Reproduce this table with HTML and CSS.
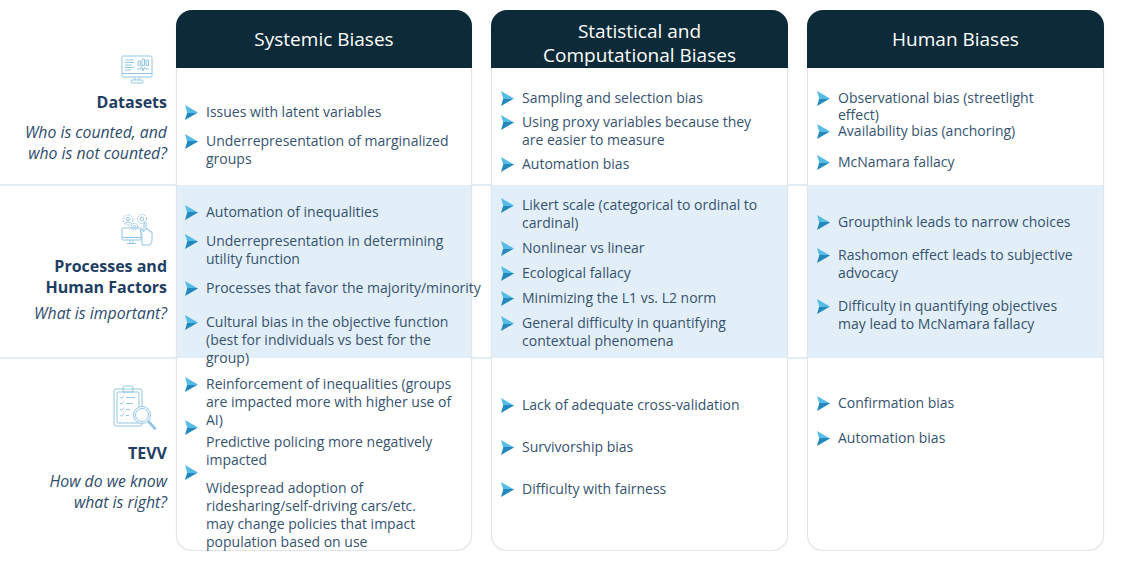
FILE: index.html
```html
<!DOCTYPE html>
<html lang="en">
<head>
<meta charset="utf-8">
<title>Sources of Bias</title>
<link rel="stylesheet" href="styles.css">
</head>
<body>
<svg class="defs" aria-hidden="true">
  <defs>
    <linearGradient id="arrowGrad" x1="0" y1="0" x2="0" y2="1">
      <stop offset="0" stop-color="#55bbe7"/>
      <stop offset="0.5" stop-color="#55bbe7"/>
      <stop offset="0.5" stop-color="#2388bc"/>
      <stop offset="1" stop-color="#2388bc"/>
    </linearGradient>
    <symbol id="arrow" viewBox="0 0 13 15">
      <polygon points="0,0 13,7.5 0,15 2.2,7.5" fill="url(#arrowGrad)"/>
    </symbol>
  </defs>
</svg>

<main class="board">
  <div class="strip"></div>

  <section class="label label-data">
    <svg class="ico ico-monitor" viewBox="0 0 32 29" aria-hidden="true">
      <rect x="1" y="1" width="30" height="21" rx="1.5"/>
      <line x1="1" y1="18.5" x2="31" y2="18.5"/>
      <line x1="4" y1="5" x2="13" y2="5"/>
      <line x1="4" y1="7.5" x2="13" y2="7.5"/>
      <line x1="4" y1="10" x2="11" y2="10"/>
      <line x1="4" y1="12.5" x2="13" y2="12.5"/>
      <line x1="4" y1="15" x2="10" y2="15"/>
      <rect x="17" y="6" width="2.5" height="4.5"/>
      <rect x="21" y="4" width="2.5" height="6.5"/>
      <rect x="25" y="5" width="2.5" height="5.5"/>
      <polyline points="16,14 19,14 20.5,11.5 22,16 23.5,12.5 25,14 28,14"/>
      <line x1="14" y1="22" x2="14" y2="25"/>
      <line x1="18" y1="22" x2="18" y2="25"/>
      <rect x="10" y="25" width="12" height="3" rx="1"/>
    </svg>
    <h2 class="label-title">Datasets</h2>
    <p class="label-q">Who is counted, and<br>who is not counted?</p>
  </section>

  <section class="label label-proc">
    <svg class="ico ico-proc" viewBox="0 0 32 33" aria-hidden="true">
      <circle cx="7" cy="7" r="5" stroke-dasharray="2 1.2"/>
      <circle cx="7" cy="6" r="1.6"/>
      <path d="M4.5 10 Q7 7.8 9.5 10"/>
      <circle cx="21" cy="6" r="4.5" stroke-dasharray="2 1.2"/>
      <circle cx="21" cy="6" r="1.8"/>
      <circle cx="13.5" cy="13.5" r="3.2" stroke-dasharray="1.6 1"/>
      <circle cx="13.5" cy="13.5" r="1.1"/>
      <rect x="1" y="15" width="19" height="12" rx="1"/>
      <line x1="1" y1="24.5" x2="20" y2="24.5"/>
      <line x1="9" y1="27" x2="9" y2="30"/>
      <line x1="12" y1="27" x2="12" y2="30"/>
      <line x1="6" y1="30.5" x2="15" y2="30.5"/>
      <path d="M21 32 L21 22 Q21 20 19.5 19 L19.5 16.5 Q20.5 15.5 22 17 L23 19 L23 9.5 Q24 8.5 25 9.5 L25 17 L25 16 Q26 15 27 16 L27 17.5 Q28 16.5 29 17.5 L29 19 Q30 18.3 31 19 L31 27 Q31 30 29 32 Z"/>
    </svg>
    <h2 class="label-title">Processes and<br>Human Factors</h2>
    <p class="label-q">What is important?</p>
  </section>

  <section class="label label-tevv">
    <svg class="ico ico-clip" viewBox="0 0 44 46" aria-hidden="true">
      <rect x="1" y="4" width="28" height="37" rx="2"/>
      <rect x="4" y="7" width="22" height="31" rx="1"/>
      <path d="M10 7 L10 3 Q10 1 12 1 L18 1 Q20 1 20 3 L20 7 Z"/>
      <polyline points="7,12 8.5,13.5 11,10.5"/>
      <line x1="13" y1="12.5" x2="22" y2="12.5"/>
      <polyline points="7,18 8.5,19.5 11,16.5"/>
      <line x1="13" y1="18.5" x2="20" y2="18.5"/>
      <polyline points="7,24 8.5,25.5 11,22.5"/>
      <line x1="13" y1="24.5" x2="17" y2="24.5"/>
      <polyline points="7,30 8.5,31.5 11,28.5"/>
      <line x1="13" y1="30.5" x2="16" y2="30.5"/>
      <circle cx="29" cy="30" r="8.5" fill="#fff"/>
      <circle cx="29" cy="30" r="6.5"/>
      <line x1="35.5" y1="36.5" x2="42" y2="43.5" stroke-width="2.6" stroke-linecap="round"/>
    </svg>
    <h2 class="label-title">TEVV</h2>
    <p class="label-q">How do we know<br>what is right?</p>
  </section>

  <article class="card card-sys">
    <h3 class="card-head">Systemic Biases</h3>
    <ul class="cell sys-r1">
      <li class="item"><svg class="arrow"><use href="#arrow"/></svg><span>Issues with latent variables</span></li>
      <li class="item"><svg class="arrow"><use href="#arrow"/></svg><span>Underrepresentation of marginalized<br>groups</span></li>
    </ul>
    <ul class="cell band sys-r2">
      <li class="item"><svg class="arrow"><use href="#arrow"/></svg><span>Automation of inequalities</span></li>
      <li class="item"><svg class="arrow"><use href="#arrow"/></svg><span>Underrepresentation in determining<br>utility function</span></li>
      <li class="item"><svg class="arrow"><use href="#arrow"/></svg><span>Processes that favor the majority/minority</span></li>
      <li class="item sys-r2-last"><svg class="arrow"><use href="#arrow"/></svg><span>Cultural bias in the objective function<br>(best for individuals vs best for the<br>group)</span></li>
    </ul>
    <ul class="cell sys-r3">
      <li class="item"><svg class="arrow"><use href="#arrow"/></svg><span>Reinforcement of inequalities (groups<br>are impacted more with higher use of<br>AI)</span></li>
      <li class="item item-b"><svg class="arrow arrow-up"><use href="#arrow"/></svg><span>Predictive policing more negatively<br>impacted</span></li>
      <li class="item item-c"><svg class="arrow arrow-up2"><use href="#arrow"/></svg><span>Widespread adoption of<br>ridesharing/self-driving cars/etc.<br>may change policies that impact<br>population based on use</span></li>
    </ul>
  </article>

  <article class="card card-stat">
    <h3 class="card-head card-head-two">Statistical and<br>Computational Biases</h3>
    <ul class="cell stat-r1">
      <li class="item"><svg class="arrow"><use href="#arrow"/></svg><span>Sampling and selection bias</span></li>
      <li class="item"><svg class="arrow"><use href="#arrow"/></svg><span>Using proxy variables because they<br>are easier to measure</span></li>
      <li class="item"><svg class="arrow"><use href="#arrow"/></svg><span>Automation bias</span></li>
    </ul>
    <ul class="cell band stat-r2">
      <li class="item"><svg class="arrow"><use href="#arrow"/></svg><span>Likert scale (categorical to ordinal to<br>cardinal)</span></li>
      <li class="item"><svg class="arrow"><use href="#arrow"/></svg><span>Nonlinear vs linear</span></li>
      <li class="item"><svg class="arrow"><use href="#arrow"/></svg><span>Ecological fallacy</span></li>
      <li class="item"><svg class="arrow"><use href="#arrow"/></svg><span>Minimizing the L1 vs. L2 norm</span></li>
      <li class="item"><svg class="arrow"><use href="#arrow"/></svg><span>General difficulty in quantifying<br>contextual phenomena</span></li>
    </ul>
    <ul class="cell stat-r3">
      <li class="item"><svg class="arrow"><use href="#arrow"/></svg><span>Lack of adequate cross-validation</span></li>
      <li class="item"><svg class="arrow"><use href="#arrow"/></svg><span>Survivorship bias</span></li>
      <li class="item"><svg class="arrow"><use href="#arrow"/></svg><span>Difficulty with fairness</span></li>
    </ul>
  </article>

  <article class="card card-human">
    <h3 class="card-head">Human Biases</h3>
    <ul class="cell human-r1">
      <li class="item item-tight"><svg class="arrow"><use href="#arrow"/></svg><span>Observational bias (streetlight<br>effect)</span></li>
      <li class="item item-overlap"><svg class="arrow"><use href="#arrow"/></svg><span>Availability bias (anchoring)</span></li>
      <li class="item item-after"><svg class="arrow"><use href="#arrow"/></svg><span>McNamara fallacy</span></li>
    </ul>
    <ul class="cell band human-r2">
      <li class="item"><svg class="arrow"><use href="#arrow"/></svg><span>Groupthink leads to narrow choices</span></li>
      <li class="item"><svg class="arrow"><use href="#arrow"/></svg><span>Rashomon effect leads to subjective<br>advocacy</span></li>
      <li class="item"><svg class="arrow"><use href="#arrow"/></svg><span>Difficulty in quantifying objectives<br>may lead to McNamara fallacy</span></li>
    </ul>
    <ul class="cell human-r3">
      <li class="item"><svg class="arrow"><use href="#arrow"/></svg><span>Confirmation bias</span></li>
      <li class="item"><svg class="arrow"><use href="#arrow"/></svg><span>Automation bias</span></li>
    </ul>
  </article>
</main>
</body>
</html>
```

FILE: styles.css
```css
* { box-sizing: border-box; }

html, body {
  margin: 0;
  padding: 0;
  background: #ffffff;
}

body {
  font-family: "Open Sans", "Noto Sans", "Liberation Sans", sans-serif;
  color: #36536f;
}

.defs {
  display: block;
  width: 0;
  height: 0;
  overflow: hidden;
}

.board {
  display: grid;
  grid-template-columns: 167px 9px 296px 19px 297px 19px 297px;
  grid-template-rows: 58px 117px 173px 193px;
  margin-top: 10px;
}

/* row separator lines, across the full width */
.strip {
  grid-column: 1 / -1;
  grid-row: 3;
  border-top: 2px solid #e3edf6;
  border-bottom: 2px solid #e3edf6;
  margin: -1px 0;
}

/* ---------- left labels ---------- */
.label {
  grid-column: 1;
  display: flex;
  flex-direction: column;
  align-items: flex-end;
  text-align: right;
  min-width: 0;
}

.label-data { grid-row: 1 / 3; padding-top: 45px; }
.label-proc { grid-row: 3; padding-top: 28px; }
.label-tevv { grid-row: 4; padding-top: 27px; }

.ico {
  fill: none;
  stroke: #93c6e6;
  stroke-width: 1;
  stroke-linejoin: round;
}

.ico-monitor { width: 32px; height: 29px; margin-right: 14px; }
.ico-proc { width: 32px; height: 33px; margin-right: 14px; }
.ico-clip { width: 44px; height: 46px; margin-right: 10px; }

.label-title {
  margin: 0;
  font-size: 16px;
  font-weight: 700;
  line-height: 21px;
  color: #1f3e64;
}

.label-q {
  margin: 0;
  font-size: 15.8px;
  font-style: italic;
  line-height: 21px;
  color: #2e4b6c;
  white-space: nowrap;
}

.label-data .label-title { margin-top: 8px; }
.label-data .label-q { margin-top: 9px; }
.label-proc .label-title { margin-top: 10px; }
.label-proc .label-q { margin-top: 5px; }
.label-tevv .label-title { margin-top: 12px; }
.label-tevv .label-q { margin-top: 7px; }

/* ---------- cards ---------- */
.card {
  grid-row: 1 / 5;
  min-width: 0;
  display: grid;
  grid-template-rows: 58px 117px 173px 192px;
  grid-template-columns: minmax(0, 1fr);
  background: #ffffff;
  border: 1px solid #e1e5e9;
  border-top: 0;
  border-radius: 16px;
  box-shadow: 0 1px 2px rgba(0, 0, 0, 0.05);
}

.card-sys { grid-column: 3; }
.card-stat { grid-column: 5; }
.card-human { grid-column: 7; }

.card-head {
  margin: 0 -1px;
  display: flex;
  align-items: center;
  justify-content: center;
  text-align: center;
  background: #0c2a38;
  color: #ffffff;
  font-size: 19px;
  font-weight: 400;
  line-height: 24px;
  border-radius: 16px 16px 0 0;
}

.card-head-two { padding-top: 8px; }

.cell {
  list-style: none;
  margin: 0;
  padding: 0 4px 0 8px;
  display: flex;
  flex-direction: column;
  min-width: 0;
}

.card-stat .cell, .card-human .cell { padding-left: 9px; }

.band { background: #e2eef8; }

.item {
  display: flex;
  align-items: flex-start;
  gap: 8px;
  font-size: 14px;
  line-height: 18px;
  white-space: nowrap;
}

.arrow {
  flex: none;
  width: 13px;
  height: 15px;
  margin-top: 1.5px;
}

/* per-cell vertical rhythm, as in the reference */
.sys-r1 { padding-top: 35px; gap: 11px; }
.sys-r2 { padding-top: 18px; gap: 11px; }
.sys-r2-last { margin-top: 5px; }
.sys-r3 { padding-top: 17px; }
.item-b { margin-top: 4px; }
.item-c { margin-top: 10px; }
.arrow-up { margin-top: -13px; }
.arrow-up2 { margin-top: -14px; }

.stat-r1 { padding-top: 21px; gap: 6px; }
.stat-r2 { padding-top: 11px; gap: 7px; }
.stat-r3 { padding-top: 38px; gap: 24px; }

.human-r1 { padding-top: 21px; }
.item-tight { line-height: 17px; }
.item-overlap { margin-top: -1px; }
.item-after { margin-top: 13px; }
.human-r2 { padding-top: 28px; gap: 15px; }
.human-r3 { padding-top: 36px; gap: 17px; }
```
